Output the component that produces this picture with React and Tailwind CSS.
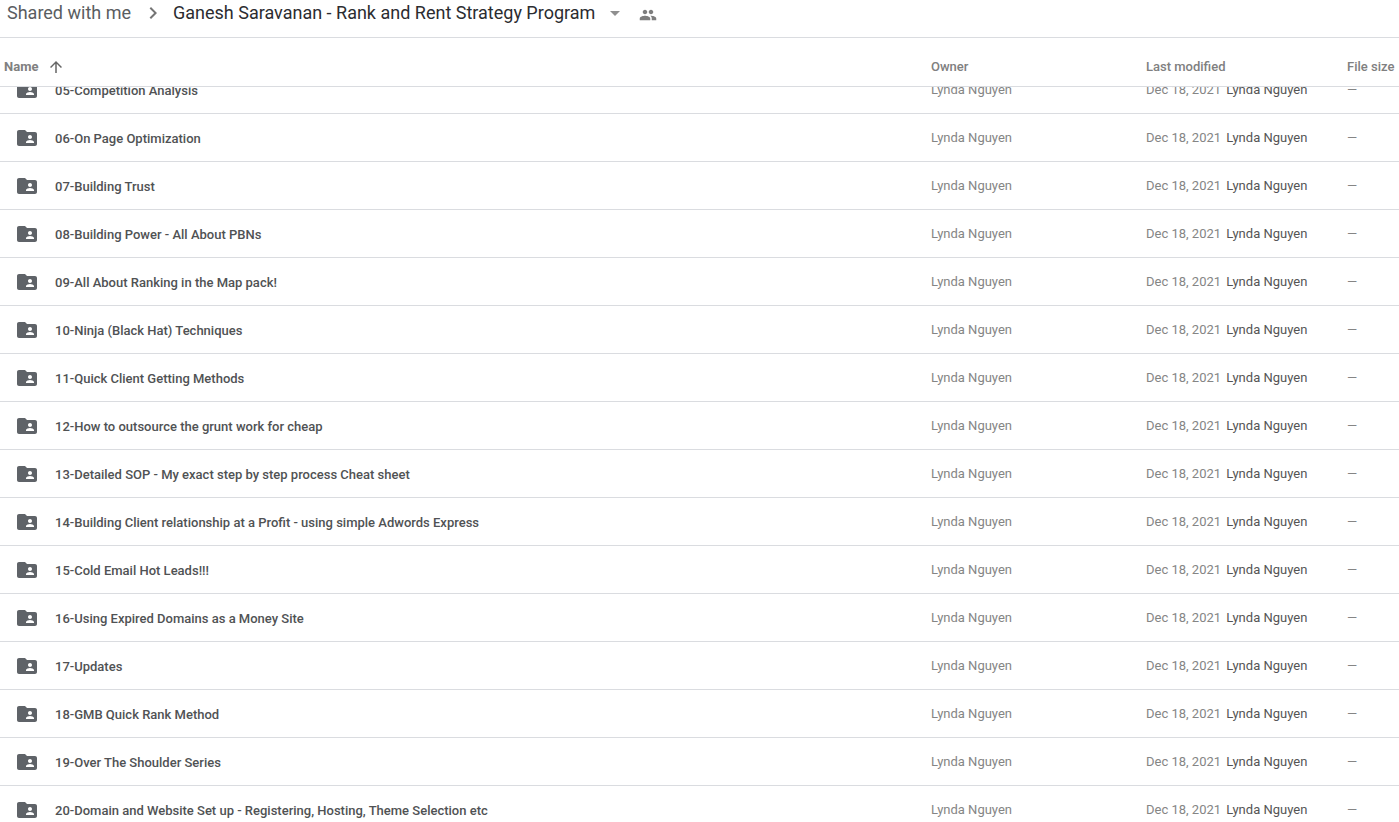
import React, { useLayoutEffect, useRef } from "react";
import {
  MdArrowDropDown,
  MdArrowUpward,
  MdChevronRight,
  MdFolderShared,
  MdPeople,
} from "react-icons/md";

const folders = [
  "05-Competition Analysis",
  "06-On Page Optimization",
  "07-Building Trust",
  "08-Building Power - All About PBNs",
  "09-All About Ranking in the Map pack!",
  "10-Ninja (Black Hat) Techniques",
  "11-Quick Client Getting Methods",
  "12-How to outsource the grunt work for cheap",
  "13-Detailed SOP - My exact step by step process Cheat sheet",
  "14-Building Client relationship at a Profit - using simple Adwords Express",
  "15-Cold Email Hot Leads!!!",
  "16-Using Expired Domains as a Money Site",
  "17-Updates",
  "18-GMB Quick Rank Method",
  "19-Over The Shoulder Series",
  "20-Domain and Website Set up - Registering, Hosting, Theme Selection etc",
];

function Breadcrumbs() {
  return (
    <header className="flex h-[38px] shrink-0 items-start border-b border-[#dadce0] pl-[7px] text-lg leading-[26px] font-['Roboto',sans-serif]">
      <a href="#shared" className="whitespace-nowrap text-[#5a5d61]">
        Shared with me
      </a>
      <MdChevronRight className="mr-2 ml-2.5 mt-px size-6 shrink-0 text-[#757575]" />
      <button type="button" className="flex items-center whitespace-nowrap text-[#2b2c30]">
        <h1>Ganesh Saravanan - Rank and Rent Strategy Program</h1>
        <MdArrowDropDown className="ml-2 size-6 text-[#8f8f8f]" />
      </button>
      <button type="button" aria-label="Manage people" className="ml-3 mt-1.5 text-[#7d7d7d]">
        <MdPeople className="size-[18px]" />
      </button>
    </header>
  );
}

function FolderRow({ name }) {
  return (
    <tr className="h-12">
      <td className="border-b border-[#dadce0] pl-4">
        <div className="flex items-center gap-4 pt-px">
          <MdFolderShared className="-ml-px size-6 shrink-0 text-[#5f6368]" />
          <span className="pt-0.5 font-medium whitespace-nowrap text-[#505254]">{name}</span>
        </div>
      </td>
      <td className="border-b border-[#dadce0] text-[#858585]">Lynda Nguyen</td>
      <td className="border-b border-[#dadce0] whitespace-nowrap text-[#858585]">
        Dec 18, 2021 <span className="ml-0.5 text-[#555555]">Lynda Nguyen</span>
      </td>
      <td className="border-b border-[#dadce0] text-[#858585]">—</td>
    </tr>
  );
}

export default function App() {
  const listRef = useRef(null);

  // open the list part of the way through the first row
  useLayoutEffect(() => {
    listRef.current.scrollTop = 21;
  }, []);

  return (
    <div className="flex h-screen flex-col overflow-hidden bg-white">
      <Breadcrumbs />
      <main ref={listRef} className="min-h-0 flex-1 overflow-y-auto [scrollbar-width:none]">
        <table className="w-full table-fixed border-separate border-spacing-0 text-left text-[13px] leading-5 font-['Roboto',sans-serif]">
          <thead className="sticky top-0 z-10 bg-white text-[#808080]">
            <tr className="h-[49px]">
              <th className="border-b border-[#dadce0] pl-1 pt-2.5 font-bold">
                <button type="button" className="flex items-center gap-[9px]">
                  Name
                  <MdArrowUpward className="size-[18px] text-[#666666]" />
                </button>
              </th>
              <th className="w-[215px] border-b border-[#dadce0] pt-2.5 font-medium">Owner</th>
              <th className="w-[201px] border-b border-[#dadce0] pt-2.5 font-medium">Last modified</th>
              <th className="w-[52px] border-b border-[#dadce0] pt-2.5 font-medium whitespace-nowrap">
                File size
              </th>
            </tr>
          </thead>
          <tbody>
            {folders.map((name) => (
              <FolderRow key={name} name={name} />
            ))}
          </tbody>
        </table>
      </main>
    </div>
  );
}
